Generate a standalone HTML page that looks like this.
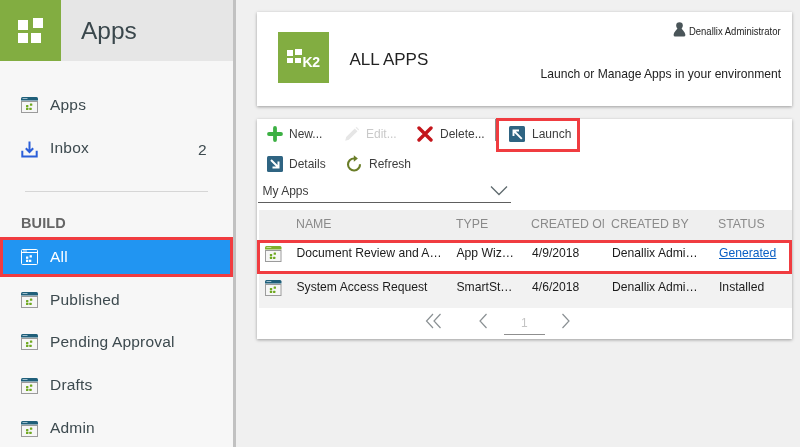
<!DOCTYPE html>
<html><head><meta charset="utf-8"><title>Apps</title>
<style>
*{box-sizing:border-box;margin:0;padding:0}
html,body{width:800px;height:447px;overflow:hidden;background:#f0f0f0;font-family:"Liberation Sans",sans-serif}
body{position:relative}
#wrap{position:absolute;left:0;top:0;width:800px;height:447px;will-change:transform}
.abs{position:absolute}
#side{left:0;top:0;width:233px;height:447px;background:#f7f7f7}
#sidehead{left:0;top:0;width:233px;height:61px;background:#e6e6e6}
#logo{left:0;top:0;width:61px;height:61px;background:#82ad41}
#divider{left:233px;top:0;width:3px;height:447px;background:#c1c1c1}
.sq{position:absolute;background:#fff;width:10px;height:10px}
#title{left:81px;top:14px;font-size:24.5px;color:#3a474c;line-height:34px;white-space:nowrap}
.nav{position:absolute;left:0;width:233px;height:40px}
.nav .ic{position:absolute;left:21px;top:12px;width:17px;height:17px}
.nav .tx{position:absolute;left:50px;top:9px;font-size:15.5px;letter-spacing:.2px;line-height:22px;color:#3d4a4f;white-space:nowrap}
#hr{left:25px;top:191px;width:183px;height:1px;background:#d6d6d6}
#build{left:21px;top:213px;font-size:14.5px;font-weight:bold;color:#666;line-height:20px;letter-spacing:0.1px}
#sel{left:0;top:237px;width:233px;height:40px;background:#2195f2;border:3px solid #f03c40}
.card{position:absolute;background:#fff;box-shadow:0 1px 3px rgba(0,0,0,.35)}
.t13{position:absolute;font-size:12px;line-height:16px;white-space:nowrap;color:#3d3d3d}
.tb{font-size:12.150px;color:#1c1c1c}
.th{position:absolute;font-size:12.3px;line-height:16px;white-space:nowrap;color:#8a8a8a;top:216px}
</style></head><body><div id="wrap">
<div id="side" class="abs"></div>
<div id="sidehead" class="abs"></div>
<div id="logo" class="abs">
 <div class="sq" style="left:18px;top:20px"></div>
 <div class="sq" style="left:32.5px;top:18.3px"></div>
 <div class="sq" style="left:18px;top:32.5px"></div>
 <div class="sq" style="left:31px;top:32.5px"></div>
</div>
<div id="title" class="abs">Apps</div>
<div id="divider" class="abs"></div>

<svg width="0" height="0" style="position:absolute">
 <defs>
  <g id="appic">
   <rect x="0.5" y="4.5" width="16" height="11" fill="#f6f6f6" stroke="#9b9b9b" stroke-width="1"/>
   <path d="M0 3.4V1.5Q0 0 1.5 0H15.5Q17 0 17 1.5V3.4z" fill="#1f5f7a"/>
   <rect x="1.5" y="1" width="5" height="1" fill="#9dbccb"/>
   <rect x="5" y="7.900" width="2.400" height="2.400" rx=".5" fill="#6fa820"/>
   <rect x="8.900" y="6.400" width="2.400" height="2.400" rx=".5" fill="#6fa820"/>
   <rect x="5" y="10.700" width="2.400" height="2.400" rx=".5" fill="#6fa820"/>
   <rect x="8.300" y="10.700" width="2.400" height="2.400" rx=".5" fill="#6fa820"/>
  </g>
  <g id="appicg">
   <rect x="0.5" y="4.5" width="16" height="11" fill="#f6f6f6" stroke="#9b9b9b" stroke-width="1"/>
   <path d="M0 3.4V1.5Q0 0 1.5 0H15.5Q17 0 17 1.5V3.4z" fill="#7fb02c"/>
   <rect x="1.5" y="1" width="5" height="1" fill="#c3dc98"/>
   <rect x="5" y="7.900" width="2.400" height="2.400" rx=".5" fill="#6fa820"/>
   <rect x="8.900" y="6.400" width="2.400" height="2.400" rx=".5" fill="#6fa820"/>
   <rect x="5" y="10.700" width="2.400" height="2.400" rx=".5" fill="#6fa820"/>
   <rect x="8.300" y="10.700" width="2.400" height="2.400" rx=".5" fill="#6fa820"/>
  </g>
 </defs>
</svg>

<div class="nav" style="top:85px"><svg class="ic" style="height:16px" viewBox="0 0 17 16"><use href="#appic"/></svg><span class="tx">Apps</span></div>
<div class="nav" style="top:128px"><svg class="ic" viewBox="0 0 17 17" style="top:12.6px"><path d="M8.5 0.5v10M4.800 7.2L8.5 11l3.700-3.800M1.300 9.800v5.700h14.400v-5.700" fill="none" stroke="#2b5fd9" stroke-width="2"/></svg><span class="tx">Inbox</span><span class="tx" style="left:198px;top:10.5px">2</span></div>
<div id="hr" class="abs"></div>
<div id="build" class="abs">BUILD</div>
<div id="sel" class="abs"></div>
<div class="nav" style="top:237.2px"><svg class="ic" style="height:16px" viewBox="0 0 17 16"><rect x="0.5" y="0.5" width="16" height="15" rx="1" fill="none" stroke="#fff"/><rect x="0.5" y="3" width="16" height="1" fill="#fff"/><rect x="2" y="1.500" width="4" height="1" fill="#fff" opacity=".8"/><rect x="5" y="7.5" width="2.3" height="2.3" fill="#fff"/><rect x="8.6" y="6.2" width="2.3" height="2.3" fill="#fff"/><rect x="5" y="10.7" width="2.3" height="2.3" fill="#fff"/><rect x="8" y="10.7" width="2.3" height="2.3" fill="#fff"/></svg><span class="tx" style="color:#fff">All</span></div>
<div class="nav" style="top:280px"><svg class="ic" style="height:16px" viewBox="0 0 17 16"><use href="#appic"/></svg><span class="tx">Published</span></div>
<div class="nav" style="top:322.2px"><svg class="ic" style="height:16px" viewBox="0 0 17 16"><use href="#appic"/></svg><span class="tx">Pending Approval</span></div>
<div class="nav" style="top:365.5px"><svg class="ic" style="height:16px" viewBox="0 0 17 16"><use href="#appic"/></svg><span class="tx" style="top:8px">Drafts</span></div>
<div class="nav" style="top:408.5px"><svg class="ic" style="height:16px" viewBox="0 0 17 16"><use href="#appic"/></svg><span class="tx" style="top:8px">Admin</span></div>

<!-- header card -->
<div class="card" style="left:257px;top:11.6px;width:535.3px;height:94.7px"></div>
<div class="abs" style="left:278px;top:32px;width:51px;height:51px;background:#82ad41">
 <div class="sq" style="left:8.800px;top:18px;width:6.5px;height:6px"></div>
 <div class="sq" style="left:17.300px;top:16.700px;width:6.5px;height:6px"></div>
 <div class="sq" style="left:8.800px;top:25.5px;width:6.5px;height:5.5px"></div>
 <div class="sq" style="left:16.700px;top:25.5px;width:6.5px;height:5.5px"></div>
 <div class="abs" style="left:24.5px;top:22.5px;font-size:14px;font-weight:bold;color:#fff;line-height:14px;letter-spacing:-0.3px">K2</div>
</div>
<div class="abs" id="allapps" style="left:349.5px;top:50px;font-size:17px;line-height:20px;color:#222;white-space:nowrap">ALL APPS</div>
<svg class="abs" style="left:672.5px;top:22px" width="13" height="15" viewBox="0 0 13 15"><circle cx="6.5" cy="3.6" r="3.3" fill="#4a5559"/><path d="M4.6 5.5C4.2 8 1 9.300 0.600 12.900Q0.600 14.400 2.200 14.400H10.800Q12.400 14.400 12.400 12.900C12 9.300 8.800 8 8.400 5.500z" fill="#4a5559"/></svg>
<div class="abs" id="usr" style="left:689.2px;top:24px;font-size:10.5px;transform:scaleX(.902);line-height:14px;color:#222;white-space:nowrap;transform-origin:0 0">Denallix Administrator</div>
<div class="abs" id="sub" style="left:540.5px;top:66px;font-size:12.1px;line-height:16px;color:#222;white-space:nowrap;transform-origin:0 0">Launch or Manage Apps in your environment</div>

<!-- list card -->
<div class="card" style="left:257px;top:118.7px;width:535.3px;height:220.1px"></div>

<!-- toolbar row 1 -->
<svg class="abs" style="left:267px;top:126px" width="16" height="16" viewBox="0 0 16 16"><path d="M8 2v12M2 8h12" stroke="#3cb043" stroke-width="3.800" stroke-linecap="round"/></svg>
<div class="t13" style="left:289px;top:126px">New...</div>
<svg class="abs" style="left:344px;top:126px" width="16" height="16" viewBox="0 0 16 16"><path d="M1.2 14.800l1-3.700L10.800 2.500l2.700 2.700-8.600 8.600z" fill="#e6e6e6"/><path d="M11.600 1.700l0.900-0.900 2.700 2.700-0.900 0.900z" fill="#eaeaea"/></svg>
<div class="t13" style="left:366px;top:126px;color:#c9c9c9">Edit...</div>
<svg class="abs" style="left:417px;top:126px" width="16" height="16" viewBox="0 0 16 16"><path d="M2 2l12 12M14 2l-12 12" stroke="#c4161c" stroke-width="3.400" stroke-linecap="round"/></svg>
<div class="t13" style="left:440px;top:126px">Delete...</div>
<div class="abs" style="left:495px;top:119px;width:1px;height:21.5px;background:#8c8c8c"></div>
<div class="abs" style="left:496px;top:118px;width:84px;height:33.5px;border:3px solid #f03c40"></div>
<svg class="abs" style="left:509px;top:126px" width="16" height="16" viewBox="0 0 16 16"><rect x="0" y="0" width="16" height="16" rx="1.500" fill="#2f6482"/><path d="M12.8 12.8L5 5M4.5 10V4.5H10" fill="none" stroke="#fff" stroke-width="1.9"/></svg>
<div class="t13" style="left:532px;top:126px">Launch</div>

<!-- toolbar row 2 -->
<svg class="abs" style="left:267px;top:156px" width="16" height="16" viewBox="0 0 16 16"><rect x="0" y="0" width="16" height="16" rx="1.500" fill="#2f6482"/><path d="M4 4l7 7M11.500 5.500v6h-6" fill="none" stroke="#fff" stroke-width="2"/></svg>
<div class="t13" style="left:289px;top:156px">Details</div>
<svg class="abs" style="left:346px;top:155px" width="17" height="19" viewBox="0 0 17 19"><path d="M8 3.5A6 6 0 1 0 14 9.200" fill="none" stroke="#6a7d28" stroke-width="2.100"/><path d="M7.800 0.300V6.700L11.900 3.5z" fill="#6a7d28"/></svg>
<div class="t13" style="left:369px;top:156px">Refresh</div>

<!-- dropdown -->
<div class="t13" style="left:262.500px;top:183px">My Apps</div>
<svg class="abs" style="left:490px;top:185px" width="18" height="11" viewBox="0 0 18 11"><path d="M1 1.500l8 8 8-8" fill="none" stroke="#5f6a6e" stroke-width="1.300"/></svg>
<div class="abs" style="left:258px;top:202px;width:253px;height:1.2px;background:#5e5e5e"></div>

<!-- table -->
<div class="abs" style="left:258.6px;top:209.7px;width:533.7px;height:31px;background:#efefef"></div>
<div class="th" style="left:296px">NAME</div>
<div class="th" style="left:456px">TYPE</div>
<div class="th" style="left:531px;width:72.5px;overflow:hidden">CREATED ON</div>
<div class="th" style="left:611px">CREATED BY</div>
<div class="th" style="left:718px">STATUS</div>

<div class="abs" style="left:259px;top:273px;width:533.3px;height:34.900px;background:#f2f2f2"></div>
<div class="abs" style="left:257px;top:240px;width:535px;height:33.700px;border:3px solid #f03c40;background:#fff"></div>

<svg class="abs" style="left:265.4px;top:245.6px" width="16.500" height="16" viewBox="0 0 17 16" preserveAspectRatio="none"><use href="#appicg"/></svg>
<div class="t13 tb" style="left:296.500px;top:245px">Document Review and A…</div>
<div class="t13 tb" style="left:456.500px;top:245px">App Wiz…</div>
<div class="t13 tb" style="left:532px;top:245px">4/9/2018</div>
<div class="t13 tb" style="left:612px;top:245px">Denallix Admi…</div>
<div class="t13 tb" style="left:719px;top:245px;color:#0a5fc4;text-decoration:underline">Generated</div>

<svg class="abs" style="left:265.4px;top:280.4px" width="16.500" height="16" viewBox="0 0 17 16" preserveAspectRatio="none"><use href="#appic"/></svg>
<div class="t13 tb" style="left:296.500px;top:279px">System Access Request</div>
<div class="t13 tb" style="left:456.500px;top:279px">SmartSt…</div>
<div class="t13 tb" style="left:532px;top:279px">4/6/2018</div>
<div class="t13 tb" style="left:612px;top:279px">Denallix Admi…</div>
<div class="t13 tb" style="left:719px;top:279px">Installed</div>

<!-- pager -->
<svg class="abs" style="left:425px;top:313px" width="17" height="16" viewBox="0 0 17 16"><path d="M8 1L1.500 8 8 15M15.500 1L9 8l6.500 7" fill="none" stroke="#8a9093" stroke-width="1.200"/></svg>
<svg class="abs" style="left:478px;top:313px" width="10" height="16" viewBox="0 0 10 16"><path d="M8.500 1L2 8l6.500 7" fill="none" stroke="#8a9093" stroke-width="1.200"/></svg>
<div class="abs" style="left:521px;top:315.5px;font-size:12px;line-height:14px;color:#c4c4c4">1</div>
<div class="abs" style="left:504px;top:334.2px;width:41px;height:1.2px;background:#8f8f8f"></div>
<svg class="abs" style="left:561px;top:313px" width="10" height="16" viewBox="0 0 10 16"><path d="M1.500 1L8 8l-6.500 7" fill="none" stroke="#8a9093" stroke-width="1.200"/></svg>
</div></body></html>
